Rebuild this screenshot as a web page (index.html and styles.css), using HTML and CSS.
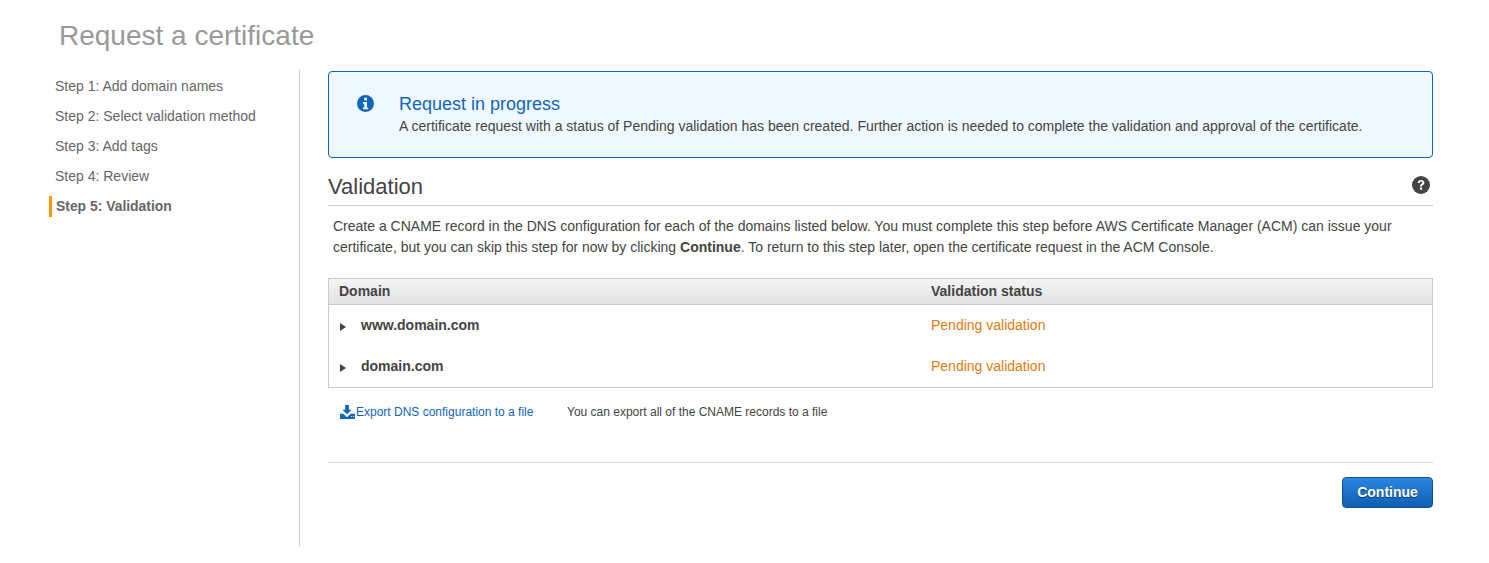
FILE: index.html
```html
<!DOCTYPE html>
<html lang="en">
<head>
<meta charset="utf-8">
<title>Request a certificate</title>
<link rel="stylesheet" href="styles.css">
</head>
<body>
<h1 class="page-title">Request a certificate</h1>
<div class="wizard">
  <nav class="steps">
    <div class="step">Step 1: Add domain names</div>
    <div class="step">Step 2: Select validation method</div>
    <div class="step">Step 3: Add tags</div>
    <div class="step">Step 4: Review</div>
    <div class="step active">Step 5: Validation</div>
  </nav>
  <main class="content">
    <section class="alert">
      <svg class="alert-icon" viewBox="0 0 16 16" width="17" height="17"><circle cx="8" cy="8" r="8" fill="#1166bb"/><rect x="6.8" y="2.6" width="2.6" height="2.5" fill="#f0f8ff"/><path d="M5.6 6.5h3.8v5.2h1.1v1.7H5.6v-1.7h1.2V8.2H5.6z" fill="#f0f8ff"/></svg>
      <div class="alert-body">
        <div class="alert-title">Request in progress</div>
        <div class="alert-text">A certificate request with a status of Pending validation has been created. Further action is needed to complete the validation and approval of the certificate.</div>
      </div>
    </section>
    <div class="section-head">
      <h2 class="section-title">Validation</h2>
      <svg class="help-icon" viewBox="0 0 18 18" width="18" height="18"><circle cx="9" cy="9" r="9" fill="#444"/><path d="M5.7 7c.1-2 1.500-3.100 3.400-3.100 1.900 0 3.300 1.100 3.300 2.800 0 1.300-.8 1.900-1.600 2.400-.6.4-.8.600-.8 1.300H8c0-1.400.4-2 1.200-2.500.7-.4 1.100-.7 1.100-1.300 0-.6-.5-1-1.200-1-.8 0-1.300.5-1.300 1.400z" fill="#fff"/><rect x="8" y="11.500" width="2.100" height="2.200" fill="#fff"/></svg>
    </div>
    <p class="intro">Create a CNAME record in the DNS configuration for each of the domains listed below. You must complete this step before AWS Certificate Manager (ACM) can issue your certificate, but you can skip this step for now by clicking <b>Continue</b>. To return to this step later, open the certificate request in the ACM Console.</p>
    <div class="table">
      <div class="row head"><div class="col-a">Domain</div><div class="col-b">Validation status</div></div>
      <div class="row item first"><div class="col-a"><span class="caret"></span>www.domain.com</div><div class="col-b">Pending validation</div></div>
      <div class="row item"><div class="col-a"><span class="caret"></span>domain.com</div><div class="col-b">Pending validation</div></div>
    </div>
    <div class="export">
      <a class="export-link"><svg viewBox="0 0 16 15" width="15" height="14"><path d="M5.500 0h4v5h3L7.500 10 2.500 5h3z" fill="#1166bb"/><path d="M0 9.500h3.500L7.500 13l4-3.500H16V15H0z" fill="#1166bb"/><rect x="12" y="11.800" width="1" height="1" fill="#fff"/><rect x="14" y="11.800" width="1" height="1" fill="#fff"/></svg>Export DNS configuration to a file</a>
      <span class="export-note">You can export all of the CNAME records to a file</span>
    </div>
    <div class="actions"><button class="continue">Continue</button></div>
  </main>
</div>
</body>
</html>
```
FILE: styles.css
```css
* { box-sizing: border-box; }
html, body { margin: 0; padding: 0; background: #fff; }
body { font-family: "Liberation Sans", Arial, sans-serif; font-size: 14px; color: #444; height: 563px; overflow: hidden; }
.page-title { margin: 0; padding: 18px 0 0 59px; height: 70px; font-size: 28px; line-height: 36px; font-weight: 400; color: #999; }
.wizard { display: flex; padding-left: 49px; }
.steps { width: 251px; height: 476px; border-right: 1px solid #ccc; padding-top: 1px; }
.step { height: 30px; line-height: 30px; padding-left: 6px; color: #666; }
.step.active { font-weight: 700; border-left: 3px solid #f90; height: 21px; line-height: 21px; margin-top: 5px; padding-left: 4px; font-size: 13.900px; }
.content { width: 1105px; margin-left: 28px; padding-top: 1px; }
.alert { display: flex; height: 87px; background: #f0f8ff; border: 1px solid #1166bb; border-radius: 4px; padding: 22px 0 0 27px; }
.alert-icon { flex: none; margin: 1px 0 0 1px; }
.alert-body { margin-left: 25px; }
.alert-title { font-size: 18px; line-height: 20px; color: #1166bb; }
.alert-text { line-height: 20px; color: #444; margin-top: 2px; }
.section-head { display: flex; justify-content: space-between; height: 48px; margin-top: 0; border-bottom: 1px solid #ccc; padding-top: 17px; }
.section-title { margin: 0; font-size: 22px; line-height: 24px; font-weight: 400; color: #444; }
.help-icon { margin: 1px 3px 0 0; }
.intro { margin: 0; padding: 10px 5px 0; line-height: 21px; height: 72px; color: #444; }
.table { border: 1px solid #ccc; }
.row { display: flex; }
.head { height: 26px; line-height: 25px; background: linear-gradient(#f4f4f4, #e3e3e3); border-bottom: 1px solid #ccc; font-weight: 700; }
.col-a { width: 602px; padding-left: 10px; }
.col-b { flex: 1; }
.item { height: 41px; line-height: 41px; }
.item .col-b { color: #e07b12; }
.item .col-a { font-weight: 700; color: #444; }
.caret { display: inline-block; width: 0; height: 0; border-left: 6px solid #444; border-top: 4.500px solid transparent; border-bottom: 4.500px solid transparent; margin: 0 15px 0 1px; vertical-align: -1px; }
.export { display: flex; align-items: center; height: 48px; padding-left: 12px; font-size: 12px; }
.export-link { display: flex; align-items: center; color: #1166bb; width: 227px; }
.export-link svg { margin-right: 1px; }
.export-note { color: #444; }
.actions { border-top: 1px solid #ddd; margin-top: 26px; padding-top: 14px; display: flex; justify-content: flex-end; }
.continue { width: 91px; height: 31px; font: 700 14px/27px "Liberation Sans", Arial, sans-serif; color: #fff; background: linear-gradient(#2a86e0, #0f5fb3); border: 1px solid #14508f; border-radius: 4px; text-shadow: 0 1px 1px #0a3a70; padding: 0 0 1px; }
```
